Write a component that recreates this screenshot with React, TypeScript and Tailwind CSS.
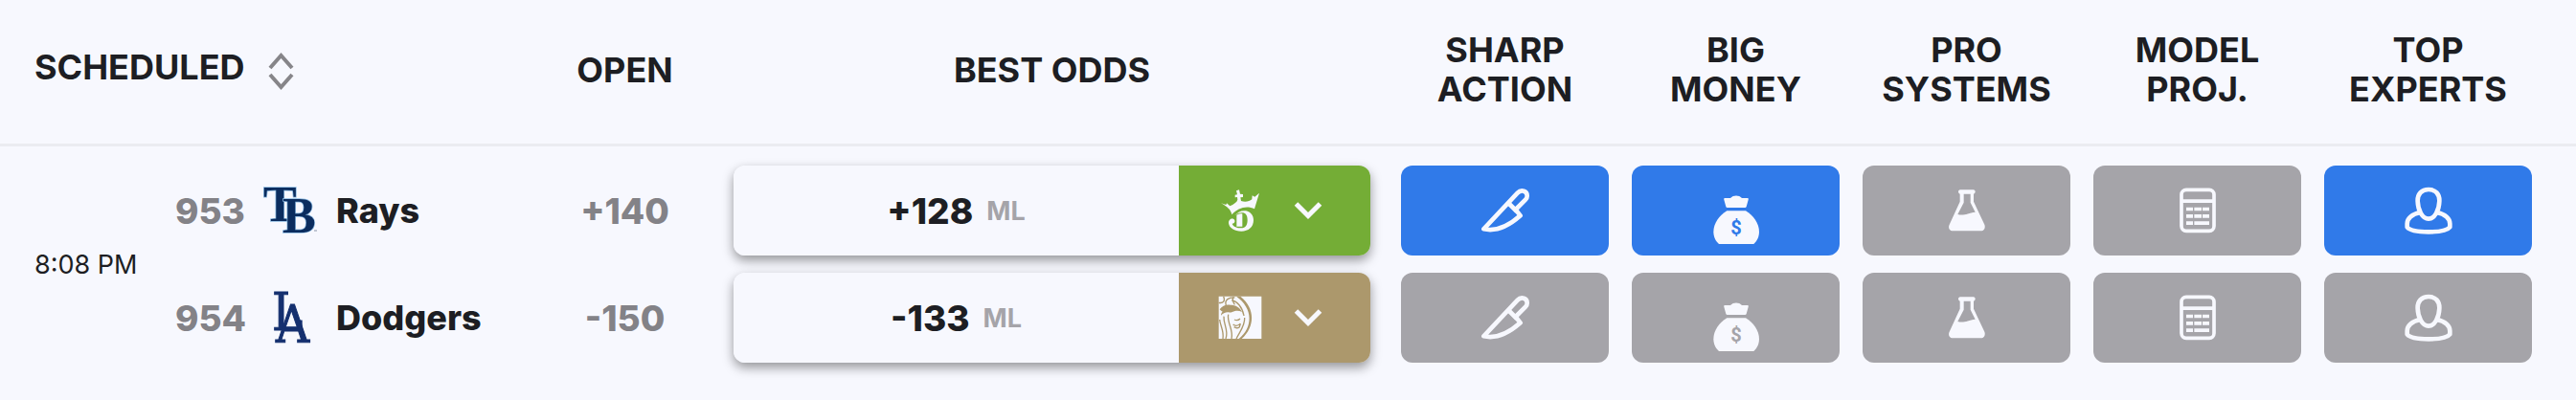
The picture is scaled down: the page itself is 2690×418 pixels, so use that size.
import type { ReactNode } from "react";

type Signal = "sharp" | "money" | "systems" | "model" | "experts";

const signals: { key: Signal; top: string; bottom: string }[] = [
  { key: "sharp", top: "SHARP", bottom: "ACTION" },
  { key: "money", top: "BIG", bottom: "MONEY" },
  { key: "systems", top: "PRO", bottom: "SYSTEMS" },
  { key: "model", top: "MODEL", bottom: "PROJ." },
  { key: "experts", top: "TOP", bottom: "EXPERTS" },
];

// team logos
function RaysLogo() {
  return (
    <svg className="h-14 w-[60px] overflow-visible" viewBox="272 192 60 56" aria-hidden="true">
      <g
        fill="#0b2d5f"
        stroke="#8ebbe2"
        strokeWidth="1.5"
        paintOrder="stroke"
        fontFamily="Liberation Serif, serif"
        fontWeight="700"
        fontSize="52"
      >
        <text x="275" y="231">T</text>
        <text x="295" y="243">B</text>
      </g>
      <path d="M328 241h3" stroke="#8a94a8" />
    </svg>
  );
}

function DodgersLogo() {
  return (
    <svg className="h-14 w-[60px] overflow-visible" viewBox="272 304 60 56" aria-hidden="true">
      <g
        fill="#15306f"
        stroke="#15306f"
        strokeWidth="1"
        fontFamily="DejaVu Serif Condensed, DejaVu Serif, serif"
        fontWeight="400"
        fontSize="54"
      >
        <text x="284" y="345">L</text>
        <text x="288" y="358">A</text>
      </g>
    </svg>
  );
}

// sportsbook logos
function DraftKingsLogo() {
  return (
    <svg className="h-12 w-12" viewBox="21 20 144 144" fill="#f7f8fe" aria-hidden="true">
      <path d="M33 69l16 5 2-5 10 9c12-6 22-12 24-20l-1-8-7 1v-8l7-1-3-12 9-3 3 13 9 1v9l-8 1 2 11c12 4 26 2 34-5l1-12 8 4 14-12-15 50c-24-12-52-4-71 18-3-16-14-25-34-36z" />
      <path d="M76 108c10-12 22-17 35-15 15 3 24 15 24 29 0 22-16 35-38 35-22 0-38-10-40-25-1-16 16-19 19-9 2 7-3 10-8 10 4 10 15 14 28 14 15 0 20-11 20-25 0-15-6-23-17-23-9 0-16 4-23 9z" />
      <path d="M82 106c6-3 11-4 18-4v40H82z" />
    </svg>
  );
}

function BetMgmLogo() {
  return (
    <svg className="h-12 w-12" viewBox="20 20 144 144" fill="none" stroke="#ac986c" aria-hidden="true">
      <path d="M25 25h134v133H25z" fill="#f7f8fe" stroke="none" />
      <path
        d="M80 25c54 38 52 98 8 133h9c42-38 43-95-4-133zM28 66c8-12 20-16 34-14 16 0 30 8 36 22-8-4-15-5-22-3-8 3-14 6-20 4-10-1-18 4-24 10 0-6 2-9 5-12-4-2-7-4-9-7z"
        fill="#ac986c"
        stroke="none"
      />
      <path d="M25 45c14 3 21-6 15-20M48 53c-6-17 10-26 27-24M70 27c-3 9 0 17 5 24M66 38c16 2 33 20 38 48" strokeWidth="4" />
      <path d="M28 98c2 22 14 34 10 60M41 88c-2 26 16 42 6 70M55 82c-5 26 17 46 10 76M106 92c2 24-14 42-26 66" strokeWidth="4" />
      <path d="M74 98c6 3 14 1 18-3M70 113c7 6 17 4 23-2l-3 10c-5 4-11 4-17 0" strokeWidth="4" />
    </svg>
  );
}

// signal icons
function KnifeIcon() {
  return (
    <svg className="h-12 w-[52px]" viewBox="78 81 156 144" fill="none" stroke="#f7f8fe" strokeWidth="14" strokeLinejoin="round" aria-hidden="true">
      <path d="M88 211L194 98c12-13 31-6 30 10 0 4-2 8-5 11l-31 31 15 19c-36 32-76 51-115 42z" />
      <path d="M165 129l27 27" />
    </svg>
  );
}

function MoneyBagIcon({ active }: { active: boolean }) {
  return (
    <svg className="h-[70px] w-12" viewBox="806 47 144 210" fill="#f7f8fe" aria-hidden="true">
      <path d="M843 113h17c9-10 27-10 36 0h17c3 0 4 2 3 5l-6 22c-1 2-2 3-4 3h-56c-2 0-3-1-4-3l-6-22c-1-3 0-5 3-5z" />
      <path d="M849 153h59c24 14 42 40 42 66 0 16-7 30-17 38H824c-10-8-17-22-17-38 0-26 18-52 42-66z" />
      <text
        x="878"
        y="226"
        textAnchor="middle"
        fontFamily="Roboto, sans-serif"
        fontWeight="700"
        fontSize="60"
        className={active ? "fill-[#307ae9]" : "fill-[#a5a4a9]"}
      >
        $
      </text>
    </svg>
  );
}

function FlaskIcon() {
  return (
    <svg className="h-12 w-10" viewBox="40 20 120 144" fill="#f7f8fe" fillRule="evenodd" aria-hidden="true">
      <path d="M79 27h41c4 0 6 3 6 6s-2 7-5 7v24l34 72c4 11-2 20-12 20H57c-11 0-17-9-12-20l33-72V40c-3 0-5-4-5-7s2-6 6-6zm11 13v27l-19 37c21 6 31-5 55-7l-15-30V40z" />
    </svg>
  );
}

function CalculatorIcon() {
  return (
    <svg className="h-12 w-10" viewBox="771 20 120 144" fill="#f7f8fe" aria-hidden="true">
      <rect x="780" y="27" width="102" height="129" rx="15" fill="none" stroke="#f7f8fe" strokeWidth="11" />
      <path d="M780 57h102v11H780z" />
      <path d="M795 82h21v11h-21zM820 82h23v11h-23zM846 82h21v11h-21zM795 104h21v11h-21zM820 104h23v11h-23zM846 104h21v11h-21zM795 126h21v11h-21zM820 126h47v11h-47z" />
    </svg>
  );
}

function ExpertIcon() {
  return (
    <svg className="h-[50px] w-[50px]" viewBox="25 16 150 150" fill="none" stroke="#f7f8fe" strokeWidth="14" aria-hidden="true">
      <path d="M100 25c-22 0-35 15-34 37 1 27 14 55 34 55s33-28 34-55c1-22-12-37-34-37z" />
      <path d="M74 97c-26 5-41 19-41 35v11c16 20 118 20 134 0v-11c0-16-15-30-41-35" strokeLinejoin="round" />
    </svg>
  );
}

function SignalIcon({ type, active }: { type: Signal; active: boolean }) {
  if (type === "sharp") return <KnifeIcon />;
  if (type === "money") return <MoneyBagIcon active={active} />;
  if (type === "systems") return <FlaskIcon />;
  if (type === "model") return <CalculatorIcon />;
  return <ExpertIcon />;
}

type Team = {
  rotation: string;
  name: string;
  logo: ReactNode;
  open: string;
  odds: string;
  book: string;
  bookLogo: ReactNode;
  bookColor: string;
  active: Signal[];
};

const teams: Team[] = [
  {
    rotation: "953",
    name: "Rays",
    logo: <RaysLogo />,
    open: "+140",
    odds: "+128",
    book: "DraftKings",
    bookLogo: <DraftKingsLogo />,
    bookColor: "bg-[#74ad36]",
    active: ["sharp", "money", "experts"],
  },
  {
    rotation: "954",
    name: "Dodgers",
    logo: <DodgersLogo />,
    open: "-150",
    odds: "-133",
    book: "BetMGM",
    bookLogo: <BetMgmLogo />,
    bookColor: "bg-[#ac986c]",
    active: [],
  },
];

export default function App() {
  return (
    <main className="min-h-screen bg-[#f7f8fe] font-['Inter',sans-serif] text-[36px] leading-[41px] text-[#1d1e23]">
      <table className="w-full table-fixed border-separate border-spacing-0">
        <colgroup>
          <col className="w-[183px]" />
          <col className="w-[376px]" />
          <col className="w-[187px]" />
          <col />
          {signals.map((s) => (
            <col key={s.key} className="w-[241px]" />
          ))}
          <col className="w-[34px]" />
        </colgroup>

        <thead>
          <tr className="font-bold *:border-b-3 *:border-[#ebecf1] *:pt-8 *:pb-9">
            <th colSpan={2} className="pl-9 text-left">
              <button className="flex items-start gap-6">
                SCHEDULED
                <svg className="h-[47px] w-[27px]" viewBox="0 0 27 47" fill="none" stroke="#868589" strokeWidth="4" aria-hidden="true">
                  <path d="M2 21L13.500 8L25 21M2 28L13.500 41L25 28" />
                </svg>
              </button>
            </th>
            <th>OPEN</th>
            <th>BEST ODDS</th>
            {signals.map((s) => (
              <th key={s.key}>
                {s.top}
                <br />
                {s.bottom}
              </th>
            ))}
            <td />
          </tr>
        </thead>

        <tbody>
          {teams.map((team, i) => (
            <tr key={team.name} className="*:py-[9px] first:*:pt-5 last:*:pb-5">
              {i === 0 && (
                <td rowSpan={2} className="pb-5! pl-9 text-[27px] whitespace-nowrap">
                  8:08 PM
                </td>
              )}
              <td>
                <div className="flex items-center font-extrabold">
                  <span className="w-[89px] text-[37px] text-[#838287]">{team.rotation}</span>
                  {team.logo}
                  <span className="pl-[19px]">{team.name}</span>
                </div>
              </td>
              <td className="text-center text-[37px] font-extrabold text-[#838287]">{team.open}</td>
              <td>
                <div className="mx-5 flex h-[94px] overflow-hidden rounded-xl shadow-[0_5px_12px_rgba(0,0,0,0.4)]">
                  <div className="flex flex-1 items-center justify-center gap-[14px] bg-[#f7f8fe]">
                    <span className="text-[37px] font-extrabold">{team.odds}</span>
                    <span className="text-[27px] font-bold text-[#a5a4a9]">ML</span>
                  </div>
                  <button
                    aria-label={`${team.book} odds`}
                    className={`flex w-50 items-center justify-center gap-8 pr-[10px] ${team.bookColor}`}
                  >
                    {team.bookLogo}
                    <svg className="h-5 w-[30px]" viewBox="0 0 30 20" fill="none" stroke="#f7f8fe" strokeWidth="5" aria-hidden="true">
                      <path d="M2.500 3L15 15.500L27.500 3" />
                    </svg>
                  </button>
                </div>
              </td>
              {signals.map((s) => {
                const active = team.active.includes(s.key);
                return (
                  <td key={s.key} className="px-3">
                    <button
                      aria-label={`${s.top} ${s.bottom}`}
                      className={`flex h-[94px] w-full items-center justify-center rounded-xl ${
                        active ? "bg-[#307ae9]" : "bg-[#a5a4a9]"
                      }`}
                    >
                      <SignalIcon type={s.key} active={active} />
                    </button>
                  </td>
                );
              })}
              <td />
            </tr>
          ))}
        </tbody>
      </table>
    </main>
  );
}
